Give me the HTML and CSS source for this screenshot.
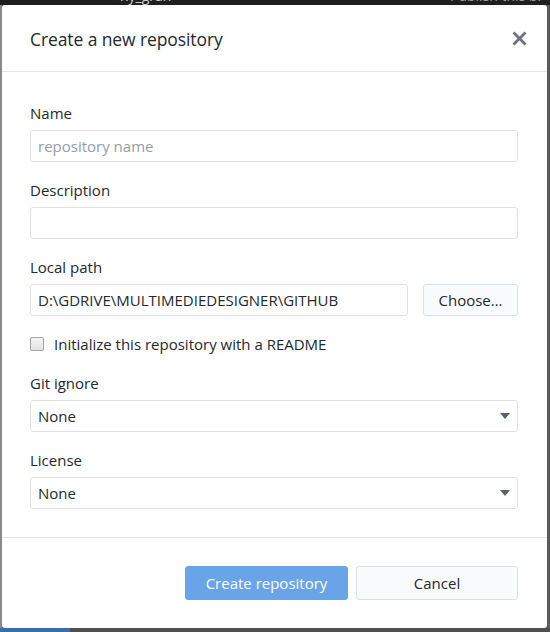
FILE: index.html
```html
<!DOCTYPE html>
<html lang="en">
<head>
<meta charset="utf-8">
<title>Create a new repository</title>
<link rel="stylesheet" href="styles.css">
</head>
<body>
<div class="backdrop">
  <div class="topstrip"><span class="bg-text bg-left">ny_gran</span><span class="bg-text bg-right">Publish this br</span></div>
  <div class="dialog">
    <header class="dialog-header">
      <h1 class="dialog-title">Create a new repository</h1>
      <button class="close-btn" aria-label="Close">
        <svg width="15" height="15" viewBox="0 0 15 15"><path d="M1.5 1.5 L13.5 13.5 M13.5 1.5 L1.5 13.5" stroke="#6a737d" stroke-width="2.8" stroke-linecap="butt"/></svg>
      </button>
    </header>
    <div class="dialog-body">
      <div class="field">
        <label class="label">Name</label>
        <input class="input" type="text" placeholder="repository name">
      </div>
      <div class="field">
        <label class="label">Description</label>
        <input class="input" type="text">
      </div>
      <div class="field">
        <label class="label">Local path</label>
        <div class="path-row">
          <input class="input" type="text" value="D:\GDRIVE\MULTIMEDIEDESIGNER\GITHUB">
          <button class="btn btn-choose">Choose…</button>
        </div>
      </div>
      <div class="check-row">
        <span class="checkbox"></span>
        <span class="check-label">Initialize this repository with a README</span>
      </div>
      <div class="field">
        <label class="label">Git ignore</label>
        <div class="select"><span>None</span><span class="caret"></span></div>
      </div>
      <div class="field">
        <label class="label">License</label>
        <div class="select"><span>None</span><span class="caret"></span></div>
      </div>
    </div>
    <footer class="dialog-footer">
      <button class="btn btn-primary">Create repository</button>
      <button class="btn btn-cancel">Cancel</button>
    </footer>
  </div>
  <div class="bottomstrip"><span class="blue-seg"></span></div>
</div>
</body>
</html>
```
FILE: styles.css
```css
* { box-sizing: border-box; }
html, body { margin: 0; padding: 0; }
body {
  background: #6f6f6f;
  font-family: "Open Sans", "Noto Sans", sans-serif;
  color: #24292e;
}
.backdrop {
  width: 550px;
  height: 632px;
  display: flex;
  flex-direction: column;
  padding: 0 3px 0 2px;
  background: linear-gradient(to right, #8a8a8a 0, #8a8a8a 2px, #5a5a5a 2px, #5a5a5a 100%);
}
.topstrip {
  height: 5px;
  margin: 0 -3px 0 -2px;
  background: #1f1f1f;
  overflow: hidden;
  position: relative;
}
.bg-text {
  position: absolute;
  top: -11px;
  font-size: 14px;
  color: #cfcfcf;
  line-height: 14px;
}
.bg-left { left: 120px; }
.bg-right { left: 450px; color: #9a9a9a; }
.dialog {
  background: #fff;
  border-radius: 3px;
  height: 623px;
  display: flex;
  flex-direction: column;
}
.dialog-header {
  height: 67px;
  border-bottom: 1px solid #e1e4e8;
  display: flex;
  align-items: center;
  justify-content: space-between;
  padding: 0 20px 0 28px;
  flex-shrink: 0;
}
.dialog-title {
  margin: 0;
  font-size: 17.5px;
  font-weight: 400;
  color: #24292e;
  letter-spacing: -0.1px;
  margin-top: 2px;
}
.close-btn {
  border: 0;
  background: none;
  padding: 0;
  width: 16px;
  height: 16px;
  display: flex;
  align-items: center;
  justify-content: center;
  margin-top: 0;
}
.dialog-body {
  padding: 31px 29px 0 28px;
  flex: 1;
  border-bottom: 1px solid #e1e4e8;
}
.field { display: flex; flex-direction: column; margin-bottom: 18px; }
.label {
  font-size: 15px;
  line-height: 20px;
  color: #24292e;
  margin-bottom: 7px;
}
.input, .select {
  height: 32px;
  border: 1px solid #dfe2e5;
  border-radius: 3px;
  background: #fff;
  font-family: inherit;
  font-size: 15px;
  color: #24292e;
  padding: 0 7px;
  width: 100%;
  outline: none;
}
.input::placeholder { color: #959da5; }
.path-row { display: flex; gap: 15px; }
.path-row .input { flex: 1; }
.btn {
  font-family: inherit;
  font-size: 15px;
  height: 32px;
  border-radius: 3px;
  border: 1px solid #dcdfe3;
  background: #fafbfc;
  color: #24292e;
  padding: 0;
}
.btn-choose { width: 95px; flex-shrink: 0; }
.check-row {
  display: flex;
  align-items: center;
  gap: 10px;
  height: 20px;
  margin-top: 0;
  margin-bottom: 19px;
}
.checkbox {
  width: 14px;
  height: 14px;
  border: 1px solid #a5a5a5;
  border-radius: 2px;
  background: linear-gradient(#f4f4f4, #e2e2e2);
  flex-shrink: 0;
}
.check-label { font-size: 15px; color: #24292e; }
.select {
  display: flex;
  align-items: center;
  justify-content: space-between;
  padding-right: 7px;
}
.caret {
  width: 0;
  height: 0;
  border-left: 5px solid transparent;
  border-right: 5px solid transparent;
  border-top: 6px solid #586069;
}
.dialog-footer {
  display: flex;
  justify-content: flex-end;
  gap: 8px;
  padding: 28px 29px 28px 0;
  flex-shrink: 0;
}
.btn-primary {
  width: 163px;
  height: 34px;
  background: #6aa4e8;
  border-color: #6aa4e8;
  color: #fff;
}
.btn-cancel { width: 162px; height: 34px; }
.bottomstrip {
  height: 4px;
  margin: 0 -3px 0 -2px;
  background: #4f4f4f;
  display: flex;
}
.blue-seg { width: 70px; background: #3a6ea8; }
```
